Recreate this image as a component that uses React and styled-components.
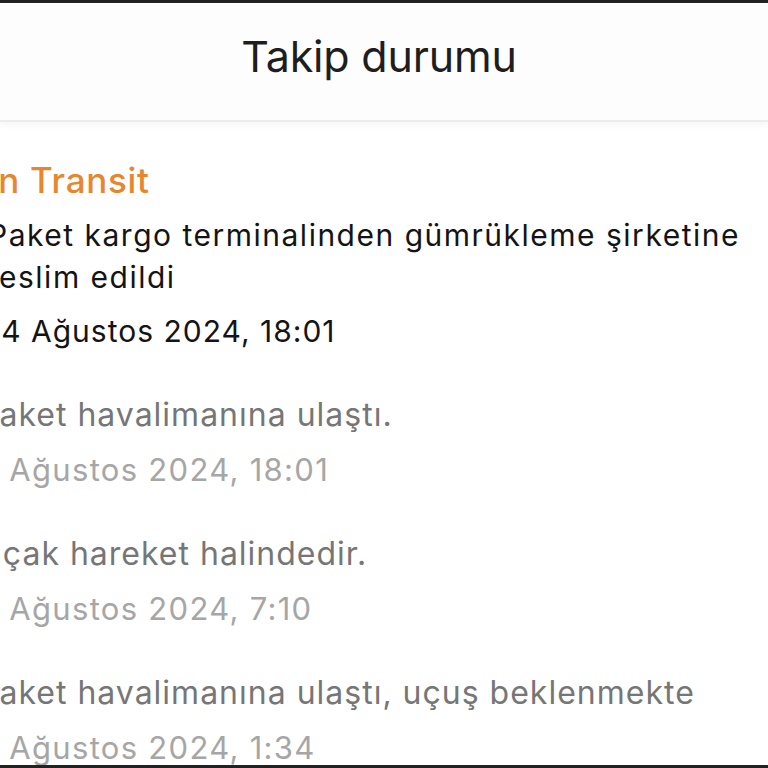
import React from 'react'
import styled, { createGlobalStyle } from 'styled-components';

const GlobalStyle = createGlobalStyle`
  html, body {
    margin: 0;
    padding: 0;
    background: #222;
  }
  body {
    font-family: Inter, "Noto Sans", sans-serif;
    -webkit-font-smoothing: antialiased;
  }
`

const events = [
  { text: 'Paket havalimanına ulaştı.', date: '4 Ağustos 2024, 18:01' },
  { text: 'Uçak hareket halindedir.', date: '4 Ağustos 2024, 7:10' },
  { text: 'Paket havalimanına ulaştı, uçuş beklenmekte', date: '4 Ağustos 2024, 1:34' },
]

const App = () => {
  return (
    <Screen>
      <GlobalStyle />
      <Header>
        <Title>Takip durumu</Title>
      </Header>
      <List>
        <Current>
          <Status>In Transit</Status>
          <Message>Paket kargo terminalinden gümrükleme şirketine teslim edildi</Message>
          <Stamp>14 Ağustos 2024, 18:01</Stamp>
        </Current>
        {events.map((e, i) => (
          <Past key={i}>
            <Message muted>{e.text}</Message>
            <Stamp muted>{e.date}</Stamp>
          </Past>
        ))}
      </List>
    </Screen>
  )
}

export default App;

const Screen = styled.div`
  width: 768px;
  height: 762px;
  margin-top: 3px;
  background: #fff;
  overflow: hidden;
  display: flex;
  flex-direction: column;
`
const Header = styled.header`
  height: 117px;
  flex-shrink: 0;
  display: flex;
  align-items: center;
  justify-content: center;
  padding-right: 10px;
  background: #fdfdfd;
  border-bottom: 2px solid #ececec;
  box-shadow: 0 4px 6px rgba(0, 0, 0, 0.03);
`
const Title = styled.h1`
  margin: 0 0 12px 0;
  font-size: 43px;
  font-weight: 400;
  color: #1e1e1e;
  letter-spacing: -0.2px;
`
const List = styled.div`
  display: flex;
  flex-direction: column;
  margin-left: -12px;
  padding-top: 36px;
  width: 772px;
`
const Current = styled.div`
  display: flex;
  flex-direction: column;
`
const Past = styled.div`
  display: flex;
  flex-direction: column;
  margin-left: -10px;
  margin-top: 42px;
  &:first-of-type {
    margin-top: 39px;
  }
`
const Status = styled.div`
  font-size: 35px;
  line-height: 44px;
  font-weight: 500;
  letter-spacing: 0.7px;
  color: #e8862d;
  margin-bottom: 12px;
`
const Message = styled.div`
  font-size: ${p => p.muted ? '32px' : '30px'};
  line-height: 42px;
  letter-spacing: ${p => p.muted ? '1px' : '1.5px'};
  color: ${p => p.muted ? '#767676' : '#141414'};
`
const Stamp = styled.div`
  font-size: ${p => p.muted ? '31px' : '30px'};
  line-height: 42px;
  letter-spacing: ${p => p.muted ? '1.3px' : '1px'};
  margin-top: ${p => p.muted ? '13px' : '12px'};
  color: ${p => p.muted ? '#a6a6a6' : '#141414'};
`
